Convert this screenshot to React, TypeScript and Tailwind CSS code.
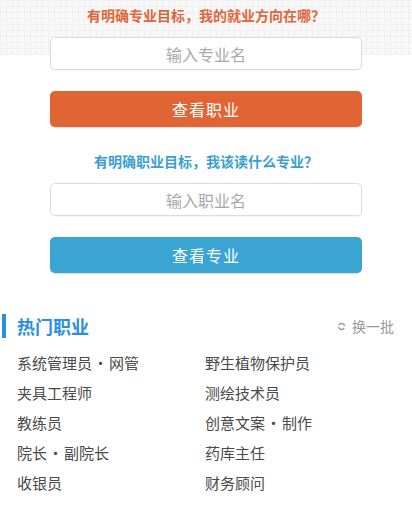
import React from "react";

const hotJobs = [
    ["系统管理员 · 网管", "野生植物保护员"],
    ["夹具工程师", "测绘技术员"],
    ["教练员", "创意文案 · 制作"],
    ["院长 · 副院长", "药库主任"],
    ["收银员", "财务顾问"],
];

function SearchBlock({
    title,
    placeholder,
    button,
    titleClass,
    buttonClass,
}: {
    title: string;
    placeholder: string;
    button: string;
    titleClass: string;
    buttonClass: string;
}) {
    return (
        <div className="flex flex-col items-center">
            <h2 className={`text-[14px] font-bold leading-[20px] ${titleClass}`}>{title}</h2>
            <div className="mt-[12px] h-[33px] w-[312px] rounded-[5px] border border-[#dcdcdc] bg-white flex items-center justify-center text-[16px] text-[#a8a8a8] shadow-[0_1px_1px_rgba(0,0,0,0.04)]">
                {placeholder}
            </div>
            <button
                className={`mt-[21px] h-[36px] w-[312px] rounded-[5px] text-white text-[16px] tracking-[1px] shadow-[0_1px_1px_rgba(0,0,0,0.15)] ${buttonClass}`}
            >
                {button}
            </button>
        </div>
    );
}

export default function App() {
    return (
        <div className="w-[412px] h-[508px] overflow-hidden bg-white font-['Noto_Sans_CJK_SC',sans-serif]">
            {/* Top search area, grid background behind the first title */}
            <div className="pt-[5px] bg-[linear-gradient(to_bottom,transparent_55px,white_55px),repeating-linear-gradient(to_right,#f0f0f0_0px,#f0f0f0_1px,transparent_1px,transparent_6px),repeating-linear-gradient(to_bottom,#f0f0f0_0px,#f0f0f0_1px,#f8f8f8_1px,#f8f8f8_6px)]">
                <SearchBlock
                    title="有明确专业目标，我的就业方向在哪？"
                    placeholder="输入专业名"
                    button="查看职业"
                    titleClass="text-[#e0663a]"
                    buttonClass="bg-[#e16534]"
                />
            </div>
            <div className="mt-[24px]">
                <SearchBlock
                    title="有明确职业目标，我该读什么专业？"
                    placeholder="输入职业名"
                    button="查看专业"
                    titleClass="text-[#3b9fcf]"
                    buttonClass="bg-[#3aa4d3]"
                />
            </div>

            {/* Hot jobs */}
            <div className="mt-[41px] flex items-center justify-between pr-[18px]">
                <div className="flex items-center">
                    <div className="ml-[2px] h-[24px] w-[4px] bg-[#2a8fe0]" />
                    <h3 className="ml-[11px] text-[18px] font-bold text-[#2a8fe0] leading-[24px]">热门职业</h3>
                </div>
                <div className="flex items-center text-[14px] text-[#9a9a9a]">
                    <svg width="9" height="9" viewBox="0 0 10 10" className="mr-[6px]" fill="none" stroke="#9a9a9a" strokeWidth="1.6">
                        <path d="M2 3.5A3.5 3.5 0 0 1 8.5 4.5" />
                        <path d="M8 6.5A3.5 3.5 0 0 1 1.5 5.5" />
                    </svg>
                    换一批
                </div>
            </div>
            <div className="mt-[10px] grid grid-cols-[188px_1fr] pl-[17px] text-[15px] text-[#4a4a4a] leading-[30px]">
                {hotJobs.map((row, i) => (
                    <React.Fragment key={i}>
                        {row.map((name, j) => (
                            <div key={j}>
                                {name.split(" · ").map((part, k) => (
                                    <React.Fragment key={k}>
                                        {k > 0 && <span className="mx-[1px]">·</span>}
                                        {part}
                                    </React.Fragment>
                                ))}
                            </div>
                        ))}
                    </React.Fragment>
                ))}
            </div>
        </div>
    );
}
